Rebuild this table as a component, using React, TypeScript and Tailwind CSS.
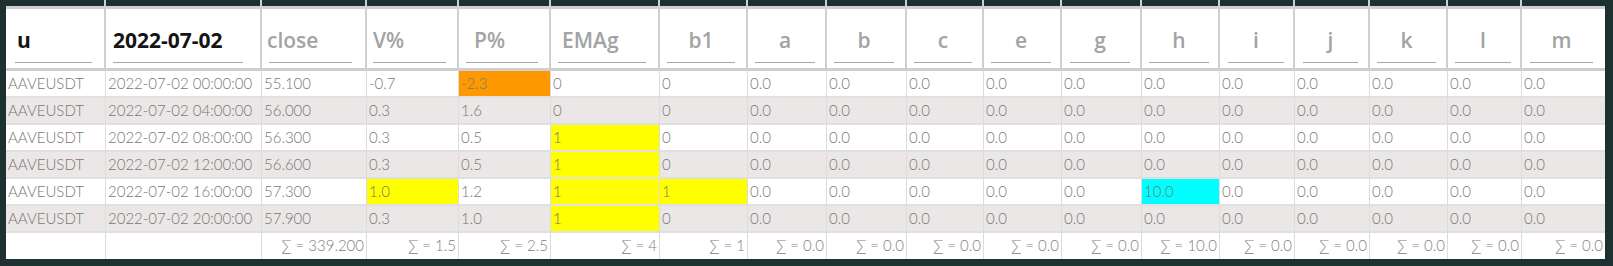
import React from "react";

type Col = {
  name: string;
  dark?: boolean;
  ul: string; // underline margin + width classes
  txt: string; // text alignment classes
};

const cols: Col[] = [
  { name: "u", dark: true, ul: "ml-[9px] w-[77px]", txt: "pl-[2px] text-left" },
  { name: "2022-07-02", dark: true, ul: "ml-[7px] w-[130px]", txt: "pl-0 text-left" },
  { name: "close", ul: "ml-[7px] w-[83px]", txt: "-ml-[2px] text-left" },
  { name: "V%", ul: "ml-[6px] w-[73px]", txt: "pl-0 text-left" },
  { name: "P%", ul: "ml-[7px] w-[72px]", txt: "pl-[8px] text-left" },
  { name: "EMAg", ul: "ml-[7px] w-[88px]", txt: "pl-[4px] text-left" },
  { name: "b1", ul: "ml-[7px] w-[68px]", txt: "text-center" },
  { name: "a", ul: "ml-[7px] w-[60px]", txt: "text-center" },
  { name: "b", ul: "ml-[7px] w-[60px]", txt: "text-center" },
  { name: "c", ul: "ml-[7px] w-[58px]", txt: "text-center" },
  { name: "e", ul: "ml-[7px] w-[60px]", txt: "text-center" },
  { name: "g", ul: "ml-[8px] w-[60px]", txt: "text-center" },
  { name: "h", ul: "ml-[7px] w-[60px]", txt: "text-center" },
  { name: "i", ul: "ml-[8px] w-[56px]", txt: "text-center" },
  { name: "j", ul: "ml-[8px] w-[55px]", txt: "text-center" },
  { name: "k", ul: "ml-[7px] w-[59px]", txt: "text-center" },
  { name: "l", ul: "ml-[7px] w-[56px]", txt: "text-center" },
  { name: "m", ul: "ml-[8px] w-[63px]", txt: "text-center" },
];

type Cell = { v: string; hl?: "o" | "y" | "c" };

const z = (n: number): Cell[] => Array.from({ length: n }, () => ({ v: "0.0" }));

const rows: Cell[][] = [
  [
    { v: "AAVEUSDT" }, { v: "2022-07-02 00:00:00" }, { v: "55.100" }, { v: "-0.7" },
    { v: "-2.3", hl: "o" }, { v: "0" }, { v: "0" }, ...z(5), { v: "0.0" }, ...z(5),
  ],
  [
    { v: "AAVEUSDT" }, { v: "2022-07-02 04:00:00" }, { v: "56.000" }, { v: "0.3" },
    { v: "1.6" }, { v: "0" }, { v: "0" }, ...z(5), { v: "0.0" }, ...z(5),
  ],
  [
    { v: "AAVEUSDT" }, { v: "2022-07-02 08:00:00" }, { v: "56.300" }, { v: "0.3" },
    { v: "0.5" }, { v: "1", hl: "y" }, { v: "0" }, ...z(5), { v: "0.0" }, ...z(5),
  ],
  [
    { v: "AAVEUSDT" }, { v: "2022-07-02 12:00:00" }, { v: "56.600" }, { v: "0.3" },
    { v: "0.5" }, { v: "1", hl: "y" }, { v: "0" }, ...z(5), { v: "0.0" }, ...z(5),
  ],
  [
    { v: "AAVEUSDT" }, { v: "2022-07-02 16:00:00" }, { v: "57.300" }, { v: "1.0", hl: "y" },
    { v: "1.2" }, { v: "1", hl: "y" }, { v: "1", hl: "y" }, ...z(5), { v: "10.0", hl: "c" }, ...z(5),
  ],
  [
    { v: "AAVEUSDT" }, { v: "2022-07-02 20:00:00" }, { v: "57.900" }, { v: "0.3" },
    { v: "1.0" }, { v: "1", hl: "y" }, { v: "0" }, ...z(5), { v: "0.0" }, ...z(5),
  ],
];

const sums = [
  "", "", "339.200", "1.5", "2.5", "4", "1",
  "0.0", "0.0", "0.0", "0.0", "0.0", "10.0", "0.0", "0.0", "0.0", "0.0", "0.0",
];

const hlClass = (hl: Cell["hl"], odd: boolean) =>
  hl === "o"
    ? "bg-[#ff9900]"
    : hl === "y"
    ? "bg-[#ffff00]"
    : hl === "c"
    ? "bg-[#00ffff]"
    : odd
    ? "bg-[#eae7e6]"
    : "bg-white";

export default function App() {
  return (
    <div className="w-[1613px] h-[266px] bg-[#1e3131] pl-[6px] pr-[8px] pb-[7px] overflow-hidden font-['Lato','Open_Sans','DejaVu_Sans',sans-serif]">
      <div className="grid grid-cols-[100px_156px_105px_92px_92px_109px_88px_79px_80px_77px_78px_80px_78px_75px_75px_78px_74px_83px] bg-white">
        {cols.map((c, i) => (
          <div
            key={c.name}
            className={`flex flex-col ${i < cols.length - 1 ? "border-r-2 border-[#cfcfcf]" : ""}`}
          >
            <div className="h-[6px] bg-[#1e3131]" />
            <div className="h-[3px] bg-[#cfcfcf]" />
            <div className="h-[59px] flex flex-col justify-end pb-[5px]">
              <div className={`${c.ul} flex flex-col`}>
                <div
                  className={`${c.txt} leading-[28px] mb-[8px] text-[21px] whitespace-nowrap font-['Open_Sans','Lato',sans-serif] ${
                    c.dark ? "text-[#141414] font-bold" : "text-[#a3a3a3] font-semibold"
                  }`}
                >
                  {c.name}
                </div>
                <div className="h-px bg-[#a8a8a8]" />
              </div>
            </div>
            <div className="h-[3px] bg-[#cfcfcf]" />
          </div>
        ))}

        {rows.map((r, ri) =>
          r.map((cell, ci) => (
            <div
              key={`${ri}-${ci}`}
              className={`h-[27px] border-b-2 border-[#e0e0e0] ${
                ci < cols.length - 1 ? "border-r" : ""
              } border-r-[#dcdcdc] pl-[2px] leading-[25px] text-[15px] font-light text-[#777777] whitespace-nowrap overflow-hidden ${hlClass(
                cell.hl,
                ri % 2 === 1
              )}`}
            >
              {cell.v}
            </div>
          ))
        )}

        {sums.map((s, i) => (
          <div
            key={`s-${i}`}
            className={`h-[26px] ${
              i < cols.length - 1 ? "border-r border-[#dcdcdc]" : ""
            } bg-white pr-[2px] text-right leading-[25px] text-[15px] font-light text-[#808080] whitespace-nowrap overflow-hidden`}
          >
            {s ? `∑ = ${s}` : ""}
          </div>
        ))}
      </div>
    </div>
  );
}
